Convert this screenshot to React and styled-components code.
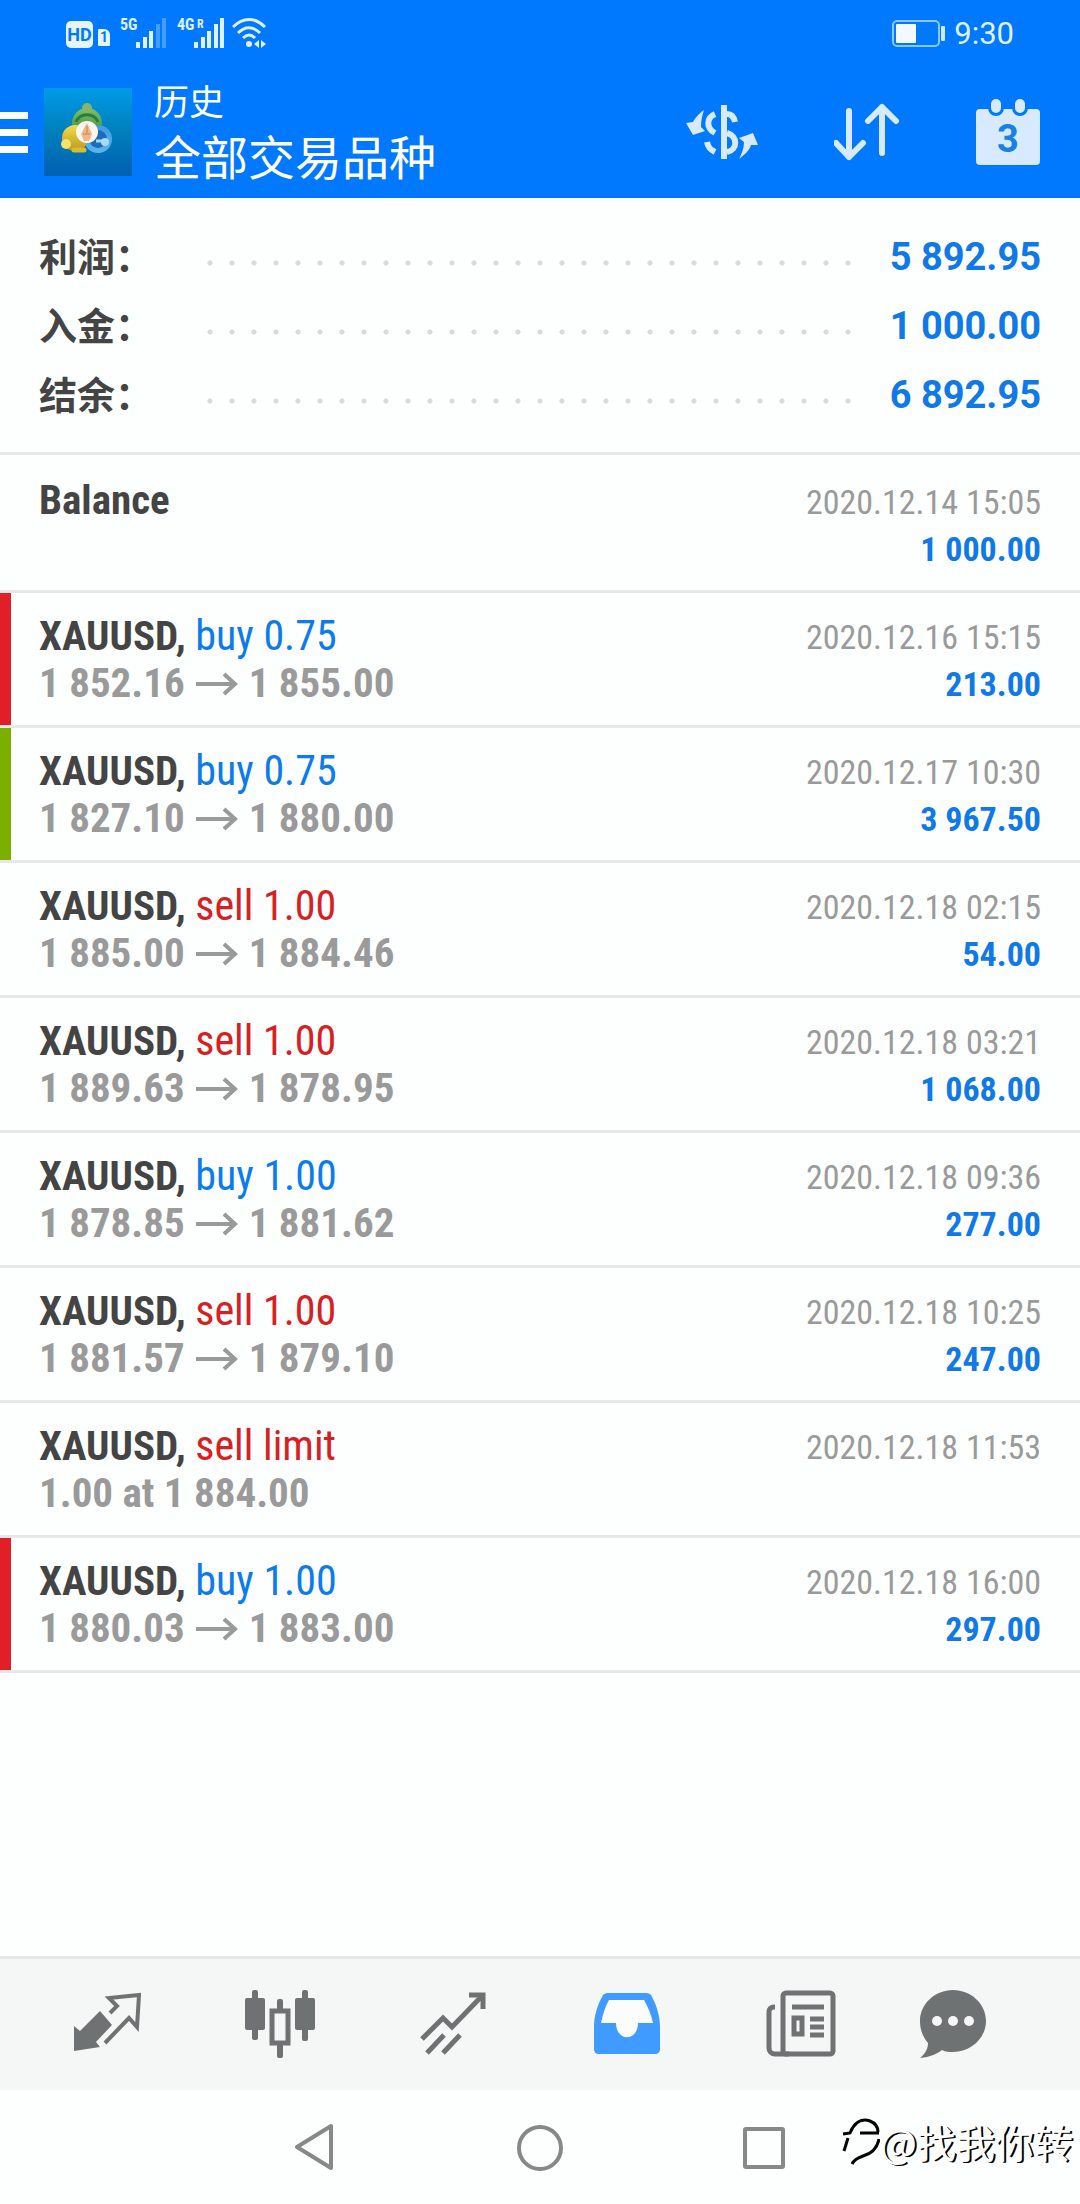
/* eslint-disable react/no-array-index-key */
import React from 'react'
import styled, { createGlobalStyle } from 'styled-components'

const deals = [
  { title: 'Balance', time: '2020.12.14 15:05', profit: '1 000.00' },
  {
    title: 'XAUUSD,',
    type: 'buy',
    volume: '0.75',
    open: '1 852.16',
    close: '1 855.00',
    time: '2020.12.16 15:15',
    profit: '213.00',
    mark: '#e01f26',
  },
  {
    title: 'XAUUSD,',
    type: 'buy',
    volume: '0.75',
    open: '1 827.10',
    close: '1 880.00',
    time: '2020.12.17 10:30',
    profit: '3 967.50',
    mark: '#7bb000',
  },
  {
    title: 'XAUUSD,',
    type: 'sell',
    volume: '1.00',
    open: '1 885.00',
    close: '1 884.46',
    time: '2020.12.18 02:15',
    profit: '54.00',
  },
  {
    title: 'XAUUSD,',
    type: 'sell',
    volume: '1.00',
    open: '1 889.63',
    close: '1 878.95',
    time: '2020.12.18 03:21',
    profit: '1 068.00',
  },
  {
    title: 'XAUUSD,',
    type: 'buy',
    volume: '1.00',
    open: '1 878.85',
    close: '1 881.62',
    time: '2020.12.18 09:36',
    profit: '277.00',
  },
  {
    title: 'XAUUSD,',
    type: 'sell',
    volume: '1.00',
    open: '1 881.57',
    close: '1 879.10',
    time: '2020.12.18 10:25',
    profit: '247.00',
  },
  {
    title: 'XAUUSD,',
    type: 'sell',
    volume: 'limit',
    note: '1.00 at 1 884.00',
    time: '2020.12.18 11:53',
  },
  {
    title: 'XAUUSD,',
    type: 'buy',
    volume: '1.00',
    open: '1 880.03',
    close: '1 883.00',
    time: '2020.12.18 16:00',
    profit: '297.00',
    mark: '#e01f26',
  },
]

const totals = [
  { label: '利润：', value: '5 892.95' },
  { label: '入金：', value: '1 000.00' },
  { label: '结余：', value: '6 892.95' },
]

const tabs = [
  { name: 'Quotes', Icon: QuotesIcon },
  { name: 'Charts', Icon: ChartsIcon },
  { name: 'Trade', Icon: TradeIcon },
  { name: 'History', Icon: HistoryIcon, active: true },
  { name: 'News', Icon: NewsIcon },
  { name: 'Messages', Icon: MessagesIcon },
]

export default function App() {
  return (
    <Screen>
      <GlobalStyle />
      <Top>
        <StatusBar />
        <Toolbar>
          <MenuButton type="button" aria-label="Menu">
            <i />
            <i />
            <i />
          </MenuButton>
          <AppLogo />
          <Heading>
            <Title>历史</Title>
            <Subtitle>全部交易品种</Subtitle>
          </Heading>
          <Actions>
            <IconButton type="button" aria-label="Symbols">
              <CurrencyIcon />
            </IconButton>
            <IconButton type="button" aria-label="Sort">
              <SortIcon />
            </IconButton>
            <IconButton type="button" aria-label="Period">
              <CalendarIcon />
            </IconButton>
          </Actions>
        </Toolbar>
      </Top>

      <Summary>
        {totals.map(el => (
          <SummaryRow key={el.label}>
            <dt>{el.label}</dt>
            <Dots />
            <dd>{el.value}</dd>
          </SummaryRow>
        ))}
      </Summary>

      <List>
        {deals.map((el, i) => (
          <Deal key={i} {...el} />
        ))}
      </List>

      <TabBar>
        {tabs.map(({ name, Icon, active }) => (
          <Tab key={name} type="button" aria-label={name} $active={active}>
            <Icon />
          </Tab>
        ))}
      </TabBar>

      <SystemBar>
        <SystemButton type="button" aria-label="Back">
          <svg width="46" height="50" viewBox="0 0 46 50">
            <path d="M38 4v42L4 25z" />
          </svg>
        </SystemButton>
        <SystemButton type="button" aria-label="Home">
          <svg width="46" height="50" viewBox="0 0 46 50">
            <circle cx="23" cy="26" r="21" />
          </svg>
        </SystemButton>
        <SystemButton type="button" aria-label="Recent apps">
          <svg width="46" height="50" viewBox="0 0 46 50">
            <rect x="4" y="7" width="38" height="38" rx="1" />
          </svg>
        </SystemButton>
        <Watermark>
          <svg width="38" height="48" viewBox="0 0 38 48" aria-hidden="true">
            <path d="M1 17l7-1C12 6 19 1 28 4M28 4c5 2 8 6 8 11M18 16h19M6 21L2 34" />
            <path d="M37 22c-2 11-9 15-16 17-6 2-9 4-11 8" />
          </svg>
          @找我你转
        </Watermark>
      </SystemBar>
    </Screen>
  )
}

function Deal({ title, type, volume, open, close, note, time, profit, mark }) {
  return (
    <Row $mark={mark}>
      <div>
        <Symbol>
          {title} {type && <Side $type={type}>{`${type} ${volume}`}</Side>}
        </Symbol>
        {open && (
          <Prices>
            {open}
            <svg width="42" height="24" viewBox="0 0 42 24" aria-label="to">
              <path d="M0 12h39M28 2l11 10-11 10" />
            </svg>
            {close}
          </Prices>
        )}
        {note && <Prices>{note}</Prices>}
      </div>
      <Result>
        <time>{time}</time>
        {profit && <b>{profit}</b>}
      </Result>
    </Row>
  )
}

function StatusBar() {
  return (
    <Status>
      <HdBadge>HD</HdBadge>
      <SimBadge>1</SimBadge>
      <Net>5G</Net>
      <svg width="31" height="30" viewBox="0 0 31 30" fill="#dff0ff">
        <rect x="0" y="24" width="4" height="6" />
        <rect x="7" y="19" width="4" height="11" />
        <rect x="13" y="13" width="4" height="17" />
        <g opacity="0.3">
          <rect x="20" y="6" width="4" height="24" />
          <rect x="26" y="0" width="4" height="30" />
        </g>
      </svg>
      <Net>4G</Net>
      <Roaming>R</Roaming>
      <BarsOverlap width="31" height="30" viewBox="0 0 31 30" fill="#dff0ff">
        <rect x="0" y="24" width="4" height="6" />
        <rect x="7" y="19" width="4" height="11" />
        <rect x="13" y="13" width="4" height="17" />
        <rect x="20" y="6" width="4" height="24" />
        <rect x="26" y="0" width="4" height="30" />
      </BarsOverlap>
      <WifiSvg width="36" height="30" viewBox="0 0 36 30">
        <g fill="none" stroke="#dff0ff" strokeWidth="3">
          <path d="M1 9C11-1 23-1 33 9" />
          <path d="M6 15c7-7 15-7 22 0" />
          <path d="M11 20c4-4 8-4 12 0" />
        </g>
        <circle cx="17" cy="26" r="3" fill="#dff0ff" />
        <path d="M22 26l5-4v8zM34 26l-5-4v8z" fill="#dff0ff" />
      </WifiSvg>
      <Battery width="54" height="28" viewBox="0 0 54 28">
        <rect x="1" y="1" width="46" height="25" rx="4" fill="none" stroke="#8cc6ff" strokeWidth="2" />
        <rect x="4" y="4" width="20" height="19" rx="1" fill="#f2f9ff" />
        <rect x="49" y="6" width="4" height="15" rx="1" fill="#cfe7ff" />
      </Battery>
      <Clock>9:30</Clock>
    </Status>
  )
}

function AppLogo() {
  return (
    <svg width="88" height="88" viewBox="0 0 88 88" aria-label="MetaTrader">
      <defs>
        <linearGradient id="bg" x1="0" y1="0" x2="0" y2="1">
          <stop offset="0" stopColor="#009be8" />
          <stop offset="0.5" stopColor="#007fbb" />
          <stop offset="1" stopColor="#0060b2" />
        </linearGradient>
        <linearGradient id="green" x1="0" y1="0" x2="0" y2="1">
          <stop offset="0" stopColor="#7fc06a" />
          <stop offset="1" stopColor="#2f8a3c" />
        </linearGradient>
        <linearGradient id="yellow" x1="0" y1="0" x2="0" y2="1">
          <stop offset="0" stopColor="#f0dc4c" />
          <stop offset="1" stopColor="#bd9a1c" />
        </linearGradient>
        <linearGradient id="blue" x1="0" y1="0" x2="0" y2="1">
          <stop offset="0" stopColor="#3f9be0" />
          <stop offset="1" stopColor="#5fb4ee" />
        </linearGradient>
      </defs>
      <rect width="88" height="88" fill="url(#bg)" />
      <circle cx="43" cy="35" r="15" fill="url(#green)" />
      <path d="M32 34a12 12 0 0122 0" stroke="#2c7d3c" strokeWidth="3" fill="none" />
      <circle cx="54" cy="51" r="14" fill="url(#blue)" />
      <circle cx="54" cy="51" r="9" fill="#1c6cb8" />
      <circle cx="31" cy="50" r="13" fill="url(#yellow)" />
      <path d="M30 62h10" stroke="#d9bb2c" strokeWidth="5" strokeLinecap="round" />
      <circle cx="43" cy="20" r="5" fill="#86b56a" />
      <circle cx="22" cy="56" r="5" fill="#f3e36a" />
      <path d="M52 53h10" stroke="#a5dafa" strokeWidth="3" />
      <circle cx="61" cy="54" r="4" fill="#a5dafa" />
      <circle cx="43" cy="44" r="11" fill="#fbf6ee" />
      <path d="M43 35l5 11-3 7h-5l-3-7z" fill="#f0b68c" />
      <path d="M43 38v9M39 46h7" stroke="#e09a6a" strokeWidth="2" />
    </svg>
  )
}

function CurrencyIcon() {
  return (
    <svg width="74" height="60" viewBox="0 0 74 60" fill="none" stroke="currentColor">
      <path d="M38 3v54" strokeWidth="6" />
      <path d="M29 12c-9 4-9 14 0 19" strokeWidth="6" />
      <path d="M41 12c5 0 7 3 8 8" strokeWidth="6" />
      <path d="M41 31c11 3 11 17 0 19" strokeWidth="6" />
      <path d="M21 40c1 6 4 8 8 10" strokeWidth="6" />
      <path d="M18 8C11 13 8 18 7 20l-7 1 7 12 12-4-4-4c0-6 1-11 3-17z" fill="currentColor" stroke="none" />
      <path d="M53 57c8-6 11-10 12-14l7 0-5-12-14 5 5 4c0 6-2 11-5 17z" fill="currentColor" stroke="none" />
    </svg>
  )
}

function SortIcon() {
  return (
    <svg
      width="68"
      height="60"
      viewBox="0 0 68 60"
      fill="none"
      stroke="currentColor"
      strokeWidth="6"
      strokeLinecap="round"
      strokeLinejoin="round"
    >
      <path d="M15 9v46M2 41l13 14 14-14" />
      <path d="M48 51V5M34 19L48 5l14 14" />
    </svg>
  )
}

function CalendarIcon() {
  return (
    <svg width="64" height="66" viewBox="0 0 64 66">
      <rect x="0" y="10" width="64" height="56" rx="4" fill="currentColor" />
      <path d="M14 8h12v1a6 6 0 01-12 0zM38 8h12v1a6 6 0 01-12 0z" fill="#0079ff" stroke="#0079ff" strokeWidth="4" />
      <rect x="15" y="0" width="10" height="14" rx="5" fill="currentColor" />
      <rect x="39" y="0" width="10" height="14" rx="5" fill="currentColor" />
      <text x="32" y="53" textAnchor="middle" fill="#1583e6" fontFamily="Roboto, sans-serif" fontSize="38" fontWeight="700">
        3
      </text>
    </svg>
  )
}

function QuotesIcon() {
  return (
    <svg width="70" height="72" viewBox="0 0 70 72">
      <path d="M3 37l6 5 20-20 12 14-16 17 4 5-26 4z" fill="currentColor" />
      <path
        d="M39 24l7-7-8-8 30-3-2 32-8-9-24 25"
        fill="none"
        stroke="currentColor"
        strokeWidth="4"
      />
    </svg>
  )
}

function ChartsIcon() {
  return (
    <svg width="70" height="72" viewBox="0 0 70 72" fill="currentColor">
      <rect x="7" y="1" width="6" height="50" rx="2" />
      <rect x="0" y="9" width="20" height="32" rx="2" />
      <rect x="57" y="1" width="6" height="51" rx="2" />
      <rect x="50" y="9" width="20" height="32" rx="2" />
      <rect x="32" y="10" width="6" height="12" rx="2" />
      <rect x="32" y="54" width="6" height="15" rx="2" />
      <rect x="27" y="22" width="16" height="32" fill="none" stroke="currentColor" strokeWidth="5" />
    </svg>
  )
}

function TradeIcon() {
  return (
    <svg width="70" height="72" viewBox="0 0 70 72" fill="none" stroke="currentColor" strokeWidth="5">
      <path d="M4 50l21-21 9 9L63 8" />
      <path d="M51 6h14v14" />
      <path d="M9 64l17-18M25 64l17-18" />
    </svg>
  )
}

function HistoryIcon() {
  return (
    <svg width="68" height="72" viewBox="0 0 68 72">
      <path d="M16 11h36l11 23-17 2c-6 16-18 16-24 0L6 34z" fill="#fbfcfc" />
      <path
        fillRule="evenodd"
        fill="currentColor"
        d="M15 4h38c3 0 5 1 6 4 5 9 8 20 8 30v22c0 3-2 5-5 5H6c-3 0-5-2-5-5V38C1 28 4 17 9 8c1-3 3-4 6-4zm1 7c-4 7-6 14-8 23h15c0 19 22 19 22 0h15c-2-9-5-16-9-23z"
      />
    </svg>
  )
}

function NewsIcon() {
  return (
    <svg width="70" height="72" viewBox="0 0 70 72" fill="none" stroke="currentColor" strokeWidth="5">
      <rect x="17" y="4" width="50" height="61" rx="3" />
      <path d="M9 18H8c-3 0-5 2-5 5v36c0 3 2 6 6 6h14" />
      <path d="M26 18h32" />
      <rect x="28" y="29" width="8" height="16" />
      <path d="M44 30h14M44 38h14M44 46h14" />
    </svg>
  )
}

function MessagesIcon() {
  return (
    <svg width="68" height="72" viewBox="0 0 68 72">
      <path
        d="M34 1c18 0 33 14 33 31S52 63 34 63c-4 0-7 0-11-2-5 4-12 7-22 8 6-5 8-10 8-15C4 48 1 41 1 32 1 15 16 1 34 1z"
        fill="currentColor"
      />
      <g fill="#f5f7f7">
        <circle cx="18" cy="32" r="5" />
        <circle cx="34" cy="32" r="5" />
        <circle cx="50" cy="32" r="5" />
      </g>
    </svg>
  )
}

const GlobalStyle = createGlobalStyle`
  body {
    margin: 0;
    background: #fdfefe;
    font-family: Roboto, 'Noto Sans CJK SC', sans-serif;
  }

  button {
    padding: 0;
    border: 0;
    background: none;
    color: inherit;
  }

  svg {
    display: block;
    flex: none;
  }
`

const Screen = styled.div`
  display: flex;
  flex-direction: column;
  min-height: 100vh;
`

const Top = styled.header`
  background: #0079ff;
  color: #fff;
`

const Status = styled.div`
  display: flex;
  align-items: flex-end;
  height: 48px;
  padding: 0 66px;
  color: #dff0ff;
`

const HdBadge = styled.span`
  width: 27px;
  font: 700 18px/27px Roboto, sans-serif;
  text-align: center;
  border-radius: 5px;
  background: #e6f4ff;
  color: #0079ff;
`

const SimBadge = styled.span`
  width: 12px;
  margin: 0 0 2px 5px;
  font: 700 14px/17px Roboto, sans-serif;
  text-align: center;
  border-radius: 1px 6px 1px 1px;
  background: #e6f4ff;
  color: #0079ff;
`

const Net = styled.span`
  align-self: flex-start;
  width: 16px;
  margin: 17px 0 0 10px;
  font: 700 16px/16px 'Roboto Condensed', sans-serif;
`

const Roaming = styled.span`
  align-self: flex-start;
  margin: 18px 0 0 4px;
  font: 700 12px/12px 'Roboto Condensed', sans-serif;
`

const BarsOverlap = styled.svg`
  margin-left: -10px;
`

const WifiSvg = styled.svg`
  margin-left: 7px;
`

const Battery = styled.svg`
  margin: 0 8px 0 auto;
`

const Clock = styled.span`
  font-size: 31px;
  line-height: 28px;
`

const Toolbar = styled.div`
  display: flex;
  align-items: center;
  box-sizing: border-box;
  height: 150px;
  padding: 18px 40px 0 0;
`

const MenuButton = styled.button`
  display: grid;
  gap: 10px;
  margin-right: 16px;

  i {
    width: 28px;
    height: 7px;
    background: #fff;
  }
`

const Heading = styled.div`
  flex: 1;
  padding-top: 4px;
  margin-left: 22px;
`

const Title = styled.h1`
  margin: 0;
  font-size: 35px;
  line-height: 50px;
  font-weight: 400;
`

const Subtitle = styled.p`
  margin: 0;
  font-size: 47px;
  line-height: 60px;
`

const Actions = styled.div`
  display: flex;
  align-items: center;
  gap: 74px;
  color: #d7eaff;
`

const IconButton = styled.button``

const Summary = styled.dl`
  margin: 0;
  padding: 24px 39px 23px;
  border-bottom: 3px solid #e8e8e8;
`

const SummaryRow = styled.div`
  display: flex;
  align-items: center;
  height: 69px;

  dt {
    width: 160px;
    padding-bottom: 5px;
    font-size: 38px;
    font-weight: 700;
    color: #444;
  }

  dd {
    margin: 0;
    width: 152px;
    text-align: right;
    font-size: 38px;
    font-weight: 700;
    color: #1079e8;
  }
`

const Dots = styled.span`
  flex: 1;
  height: 6px;
  margin: 12px 38px 0 0;
  background: radial-gradient(circle, #d8dada 2px, transparent 3px) 0 0 / 22px 6px;
`

const List = styled.ul`
  flex: 1;
  margin: 0;
  padding: 0;
  list-style: none;
`

const Row = styled.li`
  display: flex;
  justify-content: space-between;
  box-sizing: border-box;
  min-height: 135px;
  padding: 19px 39px 0;
  border-bottom: 3px solid #e8e8e8;
  box-shadow: inset 11px 0 0 ${p => p.$mark || 'transparent'};

  &:first-child {
    min-height: 138px;
    padding-top: 22px;
  }
`

const Symbol = styled.h2`
  margin: 0;
  font: 700 41px/47px 'Roboto Condensed', sans-serif;
  color: #444;
`

const Side = styled.span`
  font-size: 42px;
  font-weight: 400;
  color: ${p => (p.$type === 'buy' ? '#0c7bec' : '#d62024')};
`

const Prices = styled.p`
  display: flex;
  align-items: center;
  gap: 11px;
  margin: 0;
  font: 700 41px/47px 'Roboto Condensed', sans-serif;
  color: #9a9a9a;

  svg {
    fill: none;
    stroke: currentColor;
    stroke-width: 4px;
  }
`

const Result = styled.div`
  display: grid;
  align-content: start;
  justify-items: end;
  padding-top: 2px;
  font: 400 34px/47px 'Roboto Condensed', sans-serif;
  color: #9a9a9a;

  b {
    color: #1079e8;
  }
`

const TabBar = styled.nav`
  display: grid;
  grid-template-columns: repeat(5, 4fr) 3fr;
  align-items: center;
  height: 131px;
  padding: 0 62px 0 19px;
  border-top: 3px solid #e6e8e8;
  background: #f5f7f7;
`

const Tab = styled.button`
  display: grid;
  justify-items: center;
  color: ${p => (p.$active ? '#3f9bff' : '#6f7272')};
`

const SystemBar = styled.div`
  position: relative;
  display: flex;
  justify-content: center;
  align-items: center;
  gap: 178px;
  height: 114px;
`

const SystemButton = styled.button`
  svg {
    fill: none;
    stroke: #878888;
    stroke-width: 4px;
    stroke-linejoin: round;
  }
`

// account tag laid over the corner of the system bar
const Watermark = styled.span`
  position: absolute;
  right: 7px;
  bottom: 34px;
  display: flex;
  align-items: center;
  font-family: 'Noto Sans CJK SC', sans-serif;
  font-size: 39px;
  line-height: 58px;
  color: #fff;
  text-shadow: 2px 1px 0 #000;

  svg {
    fill: none;
    stroke: #000;
    stroke-width: 3px;
  }
`
